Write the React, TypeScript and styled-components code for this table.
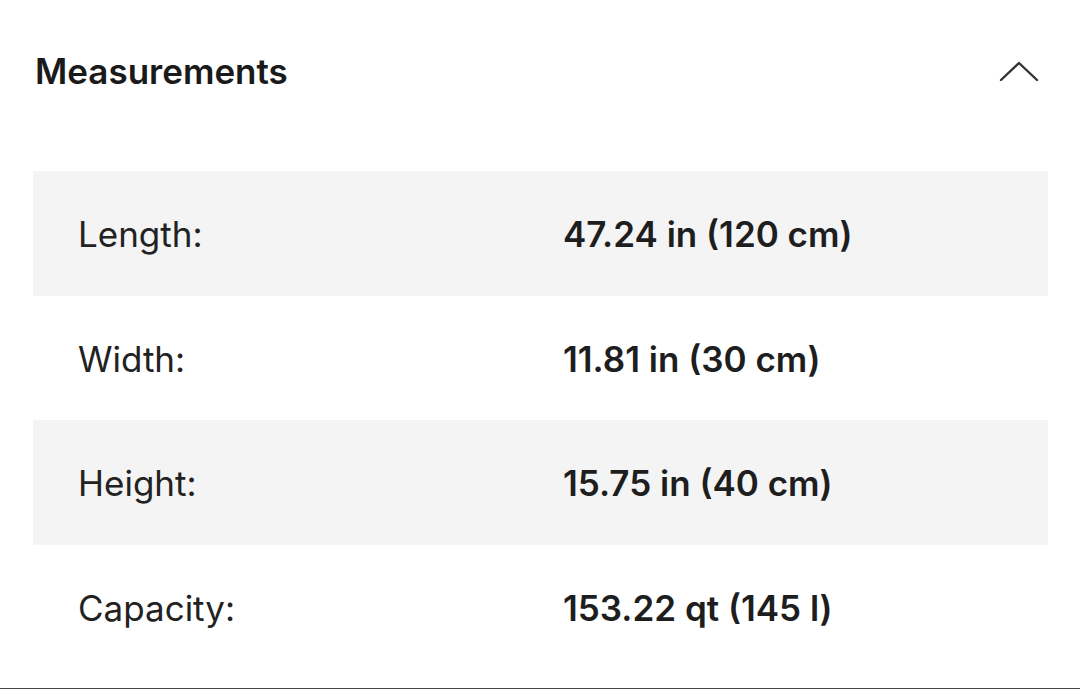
import React from "react";
import styled, { createGlobalStyle } from "styled-components";

interface Measurement {
  label: string;
  value: string;
}

const measurements: Measurement[] = [
  { label: "Length:", value: "47.24 in (120 cm)" },
  { label: "Width:", value: "11.81 in (30 cm)" },
  { label: "Height:", value: "15.75 in (40 cm)" },
  { label: "Capacity:", value: "153.22 qt (145 l)" },
];

const GlobalStyle = createGlobalStyle`
  body {
    margin: 0;
    background: #ffffff;
    font-family: Inter, "Noto Sans", sans-serif;
    color: #1c1c1c;
  }
`;

const Section = styled.section`
  box-sizing: border-box;
  width: 1080px;
  padding: 0 32px 19px 33px;
  border-bottom: 1px solid #444444;
`;

const Header = styled.div`
  display: flex;
  align-items: center;
  justify-content: space-between;
  height: 142px;
  padding: 0 9px 0 2px;
  margin-bottom: 29px;
`;

const Title = styled.h2`
  margin: 0;
  font-size: 35px;
  font-weight: 600;
  color: #1a1a1a;
`;

const ToggleButton = styled.button`
  display: flex;
  align-items: center;
  justify-content: center;
  padding: 0;
  border: none;
  background: none;
  cursor: pointer;
`;

const Table = styled.div`
  display: flex;
  flex-direction: column;
`;

const Row = styled.div<{ $shaded: boolean }>`
  display: grid;
  grid-template-columns: 485px 1fr;
  align-items: center;
  height: 124.5px;
  padding-left: 45px;
  padding-top: 2px;
  box-sizing: border-box;
  background: ${(props) => (props.$shaded ? "#f4f4f4" : "#ffffff")};
`;

const Label = styled.span`
  font-size: 35px;
  font-weight: 400;
  color: #222222;
`;

const Value = styled.span`
  font-size: 35px;
  font-weight: 600;
  color: #1e1e1e;
`;

const ChevronUp = () => (
  <svg width="40" height="22" viewBox="0 0 40 22" fill="none">
    <path
      d="M2 20 L20 3 L38 20"
      stroke="#333333"
      strokeWidth="2.4"
      strokeLinecap="round"
      strokeLinejoin="round"
    />
  </svg>
);

const App = () => (
  <>
    <GlobalStyle />
    <Section>
      <Header>
        <Title>Measurements</Title>
        <ToggleButton aria-label="Collapse measurements">
          <ChevronUp />
        </ToggleButton>
      </Header>
      <Table>
        {measurements.map((item, index) => (
          <Row key={item.label} $shaded={index % 2 === 0}>
            <Label>{item.label}</Label>
            <Value>{item.value}</Value>
          </Row>
        ))}
      </Table>
    </Section>
  </>
);

export default App;
